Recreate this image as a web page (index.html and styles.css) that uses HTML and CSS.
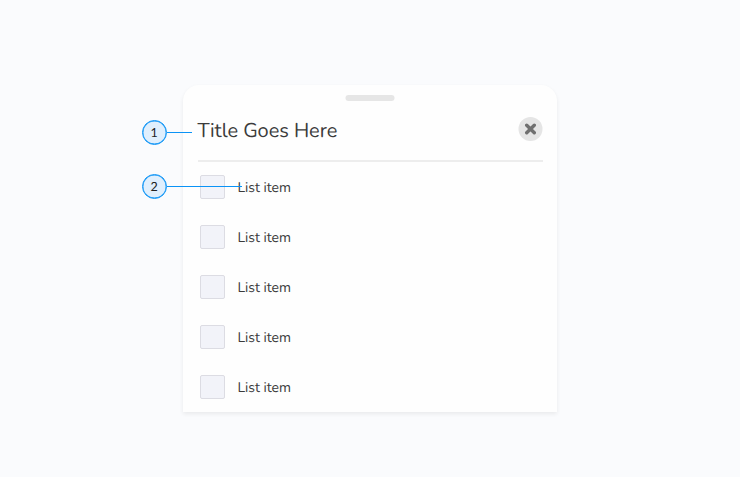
FILE: index.html
```html
<!DOCTYPE html>
<html lang="en">
<head>
<meta charset="utf-8">
<title>Bottom sheet anatomy</title>
<link rel="stylesheet" href="styles.css">
</head>
<body>
<main class="sheet">
  <div class="handle"></div>
  <header class="header">
    <h1 class="title">Title Goes Here</h1>
    <button class="close" aria-label="Close">
      <svg width="12" height="12" viewBox="0 0 12 12"><path d="M2.2 2.2 9.8 9.8M9.8 2.2 2.2 9.8"/></svg>
    </button>
  </header>
  <ul class="list">
    <li class="item"><span class="box"></span><span class="label">List item</span></li>
    <li class="item"><span class="box"></span><span class="label">List item</span></li>
    <li class="item"><span class="box"></span><span class="label">List item</span></li>
    <li class="item"><span class="box"></span><span class="label">List item</span></li>
    <li class="item"><span class="box"></span><span class="label">List item</span></li>
  </ul>
  <div class="callout callout-title"><span class="number"><span class="digit">1</span></span><span class="line"></span></div>
  <div class="callout callout-item"><span class="number"><span class="digit">2</span></span><span class="line"></span></div>
</main>
</body>
</html>
```
FILE: styles.css
```css
* { box-sizing: border-box; }

body {
  margin: 0;
  height: 477px;
  padding-top: 85px;
  background: #fafbfd;
  color: #3b3b3b;
  font-family: Nunito, Lato, sans-serif;
  text-rendering: geometricPrecision;
}

.sheet {
  position: relative;
  width: 374px;
  height: 327px;
  margin: 0 auto;
  padding: 10px 14.5px 0;
  background: #fefefe;
  border-radius: 16px 16px 0 0;
  box-shadow: 0 2px 4px rgba(0, 0, 0, 0.07);
}

.handle {
  width: 49px;
  height: 6px;
  margin: 0 auto;
  border-radius: 3px;
  background: #e6e6e6;
  transform: translateX(-0.5px);
}

.header {
  display: flex;
  justify-content: space-between;
  align-items: flex-start;
  height: 61px;
  padding-top: 16px;
  border-bottom: 2px solid #ededed;
}

.title {
  margin: 0;
  padding-top: 1px;
  font-size: 20px;
  line-height: 27px;
  font-weight: 400;
  letter-spacing: -0.05px;
}

.close {
  display: grid;
  place-items: center;
  width: 24px;
  height: 24px;
  padding: 0;
  border: 0;
  border-radius: 50%;
  background: #e5e5e5;
  transform: translateX(-0.5px);
}

.close path {
  fill: none;
  stroke: #707070;
  stroke-width: 3.4;
  stroke-linecap: round;
}

.list {
  display: grid;
  grid-auto-rows: 50px;
  margin: 0;
  padding: 0;
  list-style: none;
}

.item {
  display: flex;
  align-items: center;
  gap: 12.5px;
  padding-left: 2.5px;
}

.box {
  width: 25px;
  height: 24px;
  border: 1px solid #dcdce3;
  border-radius: 2px;
  background: #f2f3f9;
}

.label {
  font-size: 14px;
  line-height: 20px;
  transform: translateY(0.5px);
}

.callout {
  position: absolute;
  left: -41px;
  display: flex;
  align-items: center;
}

.callout-title { top: 35px; }
.callout-item { top: 89px; }

.number {
  width: 25px;
  height: 25px;
  border: 1px solid #0b93f6;
  border-radius: 50%;
  background: #e0effd;
  box-shadow: inset 0 0 0 0.4px #0b93f6;
  color: #222;
  font-family: Lato, sans-serif;
  font-size: 12.5px;
  line-height: 23px;
  text-align: center;
}

.digit {
  display: block;
  transform: translate(-0.5px, -0.3px);
}

.line {
  width: 25px;
  height: 1px;
  background: #0b93f6;
}

.callout-item .line { width: 75px; }
```
